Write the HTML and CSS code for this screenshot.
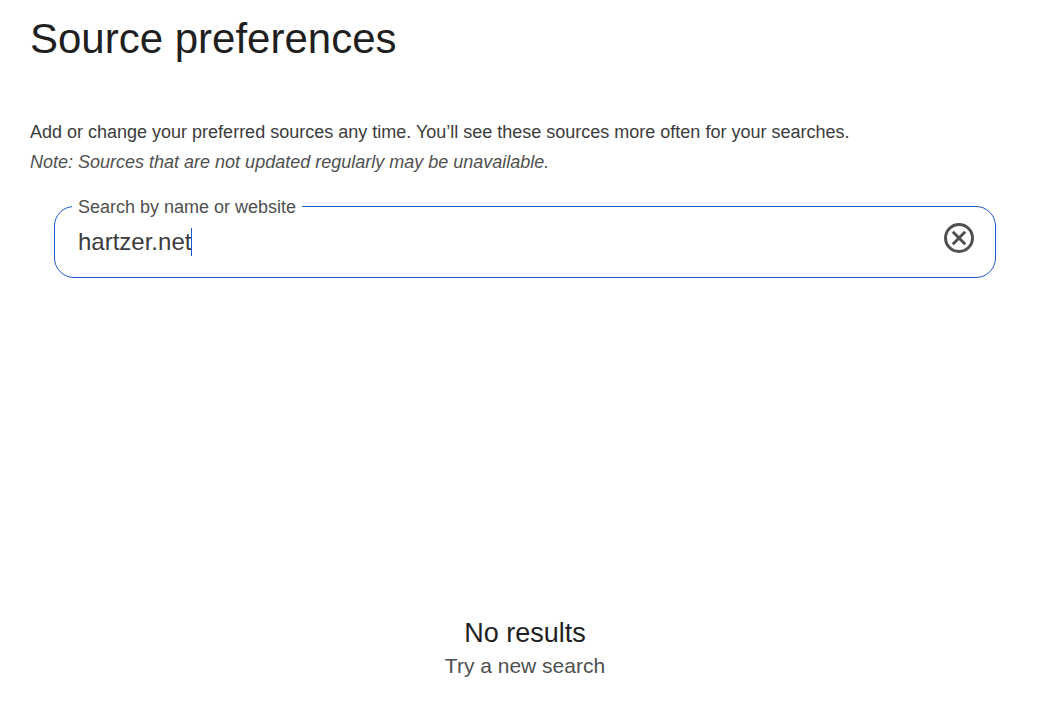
FILE: index.html
```html
<!DOCTYPE html>
<html lang="en">
<head>
<meta charset="utf-8">
<meta name="viewport" content="width=device-width, initial-scale=1">
<title>Source preferences</title>
<link rel="stylesheet" href="styles.css">
</head>
<body>
<main class="page">
  <h1 class="title">Source preferences</h1>
  <p class="intro">Add or change your preferred sources any time. You’ll see these sources more often for your searches.</p>
  <p class="note">Note: Sources that are not updated regularly may be unavailable.</p>
  <form class="search">
    <fieldset class="field">
      <legend class="field-legend"><label for="source">Search by name or website</label></legend>
      <div class="field-row">
        <div class="entry">
          <input class="field-input" id="source" type="text" value="hartzer.net" autocomplete="off" spellcheck="false">
          <span class="caret-line" aria-hidden="true"><span class="caret-text">hartzer.net</span></span>
        </div>
        <button class="clear" type="button" aria-label="Clear search">
          <svg class="clear-icon" viewBox="0 0 32 32" fill="none" stroke="currentColor" stroke-width="3" aria-hidden="true">
            <circle cx="16" cy="16" r="13.5"/>
            <path d="M9.8 9.8L22.2 22.2M22.2 9.8L9.8 22.2"/>
          </svg>
        </button>
      </div>
    </fieldset>
  </form>
  <section class="empty">
    <h2 class="empty-title">No results</h2>
    <p class="empty-hint">Try a new search</p>
  </section>
</main>
</body>
</html>
```
FILE: styles.css
```css
* { box-sizing: border-box; }
body {
  margin: 0;
  background: #fff;
  color: #1f1f1f;
  font-family: "Liberation Sans", Arial, sans-serif;
}
.page {
  display: flex;
  flex-direction: column;
  min-height: 100vh;
  padding: 14px 18px 45px 30px;
}
.title { margin: 0 0 53px; font-size: 42px; line-height: 50px; font-weight: 400; }
.intro, .note { margin: 0; font-size: 18px; line-height: 30px; }
.intro { color: #3c3c3c; }
.note { color: #505050; font-style: italic; }
.search { margin: 18px 24px 0; }
.field {
  min-width: 0;
  margin: 0;
  padding: 0 20px 18px 17px;
  border: 1px solid #1c58c7;
  border-radius: 20px;
}
.field-legend { padding: 2px 6px 0; color: #505050; font-size: 18px; line-height: 20px; }
.field-row { display: flex; align-items: center; padding-left: 6px; }
.entry { position: relative; flex: 1; min-width: 0; }
.field-input {
  display: block;
  width: 100%;
  height: 42px;
  padding: 8px 0 0;
  border: 0;
  outline: 0;
  background: transparent;
  color: #3c3c3c;
  font: 24px/30px "Liberation Sans", Arial, sans-serif;
}
.caret-line { position: absolute; top: 11px; left: 0; pointer-events: none; }
.caret-text {
  display: block;
  border-right: 1px solid #1c58c7;
  color: transparent;
  font-size: 24px;
  line-height: 28px;
}
.clear { flex: none; padding: 0; border: 0; background: transparent; color: #505050; cursor: pointer; }
.clear-icon { display: block; width: 32px; height: 32px; }
.empty { margin-top: auto; text-align: center; }
.empty-title { margin: 0; font-size: 27px; line-height: 36px; font-weight: 400; }
.empty-hint { margin: 0; color: #505050; font-size: 21px; line-height: 30px; }
```
